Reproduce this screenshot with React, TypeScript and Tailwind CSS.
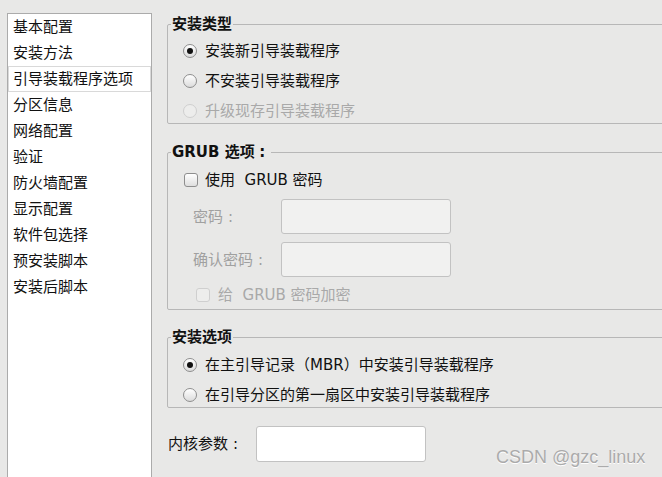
import type { ReactNode } from 'react'

const navItems = [
  '基本配置', '安装方法', '引导装载程序选项', '分区信息', '网络配置', '验证',
  '防火墙配置', '显示配置', '软件包选择', '预安装脚本', '安装后脚本',
]

const font = 'font-["DejaVu_Sans","Noto_Sans_CJK_SC",sans-serif]'

// fullwidth colon, centered in its cell like the original toolkit font
const Colon = () => <span className="inline-block w-[15px] text-center">:</span>

function Radio({ checked, disabled }: { checked?: boolean; disabled?: boolean }) {
  return (
    <span
      className={
        'flex h-[14px] w-[14px] shrink-0 items-center justify-center rounded-full border ' +
        (disabled
          ? 'border-[#cfcfcf] bg-[#ededec]'
          : 'border-[#8e8e8e] bg-gradient-to-b from-white to-[#dcdcdc]')
      }
    >
      {checked && <span className="h-[6px] w-[6px] rounded-full bg-[#111]" />}
    </span>
  )
}

function Checkbox({ disabled }: { disabled?: boolean }) {
  return (
    <span
      className={
        'h-[14px] w-[14px] shrink-0 rounded-[3px] border ' +
        (disabled
          ? 'border-[#cfcfcf] bg-[#ededec]'
          : 'border-[#8e8e8e] bg-gradient-to-b from-white to-[#dedede]')
      }
    />
  )
}

function Group({ title, children }: { title: ReactNode; children: ReactNode }) {
  return (
    <fieldset className="rounded-[2px] border border-[#b7b7b7]">
      <legend className="ml-[3px] px-[1px] text-[15px] font-bold leading-[20px] text-[#111]">
        {title}
      </legend>
      {children}
    </fieldset>
  )
}

function RadioRow({ label, checked, disabled }: { label: string; checked?: boolean; disabled?: boolean }) {
  return (
    <div className={'flex h-[24px] items-center gap-[8px] pl-[15px] ' + (disabled ? 'text-[#a9a9a9]' : 'text-[#111]')}>
      <Radio checked={checked} disabled={disabled} />
      <span>{label}</span>
    </div>
  )
}

export default function App() {
  return (
    <div className={`relative flex h-[477px] w-[662px] overflow-hidden bg-[#e8e8e7] text-[15px] leading-[20px] ${font}`}>
      <div className="ml-[7px] mt-[13px] h-[480px] w-[145px] shrink-0 border border-[#ababab] bg-white">
        {navItems.map((item) => (
          <div
            key={item}
            className={
              'flex h-[26px] items-center text-[#111] ' +
              (item === '引导装载程序选项' ? 'border border-[#d9d9d9] pl-[4px]' : 'pl-[5px]')
            }
          >
            {item}
          </div>
        ))}
      </div>

      <div className="ml-[15px] mr-[-20px] flex flex-1 flex-col pt-[14px]">
        <Group title="安装类型">
          <div className="flex flex-col gap-[6px] pt-[5px]">
            <RadioRow label="安装新引导装载程序" checked />
            <RadioRow label="不安装引导装载程序" />
            <RadioRow label="升级现存引导装载程序" disabled />
          </div>
        </Group>

        <div className="mt-[18px]">
          <Group title={<>GRUB 选项<Colon /></>}>
            <div className="flex flex-col pb-[2px]">
              <div className="mt-[6px] flex h-[24px] items-center gap-[7px] pl-[16px] text-[#111]">
                <Checkbox />
                <span>使用&nbsp;&nbsp;GRUB 密码</span>
              </div>
              <div className="mt-[7px] flex items-center pl-[25px] text-[#a0a0a0]">
                <span className="w-[88px]">密码<Colon /></span>
                <div className="h-[35px] w-[170px] rounded-[3px] border border-[#c2c2c2] bg-[#f1f1f0]" />
              </div>
              <div className="mt-[8px] flex items-center pl-[25px] text-[#a0a0a0]">
                <span className="w-[88px]">确认密码<Colon /></span>
                <div className="h-[35px] w-[170px] rounded-[3px] border border-[#c2c2c2] bg-[#f1f1f0]" />
              </div>
              <div className="mt-[6px] flex h-[24px] items-center gap-[8px] pl-[28px] text-[#a9a9a9]">
                <Checkbox disabled />
                <span>给&nbsp;&nbsp;GRUB 密码加密</span>
              </div>
            </div>
          </Group>
        </div>

        <div className="mt-[17px]">
          <Group title="安装选项">
            <div className="flex flex-col gap-[6px] pt-[6px]">
              <RadioRow label="在主引导记录（MBR）中安装引导装载程序" checked />
              <RadioRow label="在引导分区的第一扇区中安装引导装载程序" />
            </div>
          </Group>
        </div>

        <div className="mt-[18px] flex items-center pl-[1px] text-[#111]">
          <span className="w-[88px]">内核参数<Colon /></span>
          <div className="h-[36px] w-[170px] rounded-[3px] border border-[#c2c2c2] bg-white" />
        </div>
      </div>

      <div className="absolute left-[496px] top-[445px] font-['Liberation_Sans',Arial,sans-serif] text-[18px] leading-[24px] text-[#ababab] [text-shadow:0_1px_0_#ffffff]">
        CSDN @gzc_linux
      </div>
    </div>
  )
}
